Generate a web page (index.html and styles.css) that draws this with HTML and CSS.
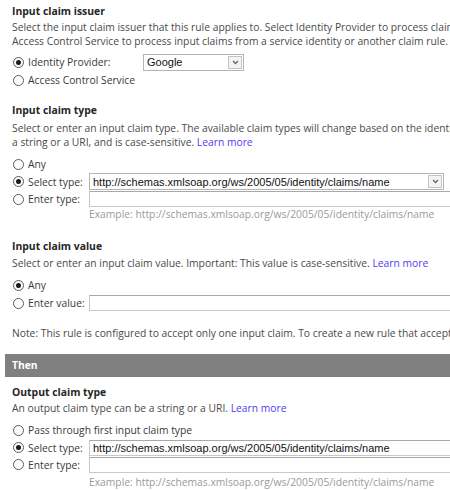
FILE: index.html
```html
<!DOCTYPE html>
<html>
<head>
<meta charset="utf-8">
<link rel="stylesheet" href="styles.css">
</head>
<body>
<div class="page">
  <section class="group g1">
    <h2 class="title">Input claim issuer</h2>
    <p class="desc">Select the input claim issuer that this rule applies to. Select Identity Provider to process claims issued by an identity provider. Select<br>Access Control Service to process input claims from a service identity or another claim rule.</p>
    <div class="opts">
      <div class="opt">
        <span class="radio checked"></span>
        <span class="lbl lbl-wide">Identity Provider:</span>
        <div class="select small"><span class="val">Google</span><span class="arrow"><svg width="7" height="5" viewBox="0 0 7 5"><path d="M1 1l2.5 2.5L6 1" fill="none" stroke="#666" stroke-width="1.3"/></svg></span></div>
      </div>
      <div class="opt">
        <span class="radio"></span>
        <span class="lbl">Access Control Service</span>
      </div>
    </div>
  </section>

  <section class="group g2">
    <h2 class="title">Input claim type</h2>
    <p class="desc">Select or enter an input claim type. The available claim types will change based on the identity provider selected. An input claim type can be<br>a string or a URI, and is case-sensitive. <a class="link" href="#">Learn more</a></p>
    <div class="opts">
      <div class="opt">
        <span class="radio"></span>
        <span class="lbl">Any</span>
      </div>
      <div class="opt short">
        <span class="radio checked"></span>
        <span class="lbl lbl-narrow">Select type:</span>
        <div class="select wide"><span class="val">http://schemas.xmlsoap.org/ws/2005/05/identity/claims/name</span><span class="arrow"><svg width="7" height="5" viewBox="0 0 7 5"><path d="M1 1l2.5 2.5L6 1" fill="none" stroke="#666" stroke-width="1.3"/></svg></span></div>
      </div>
      <div class="opt">
        <span class="radio"></span>
        <span class="lbl lbl-narrow">Enter type:</span>
        <div class="input"></div>
      </div>
      <p class="example">Example: http://schemas.xmlsoap.org/ws/2005/05/identity/claims/name</p>
    </div>
  </section>

  <section class="group g3">
    <h2 class="title">Input claim value</h2>
    <p class="desc">Select or enter an input claim value. Important: This value is case-sensitive. <a class="link" href="#">Learn more</a></p>
    <div class="opts">
      <div class="opt">
        <span class="radio checked"></span>
        <span class="lbl">Any</span>
      </div>
      <div class="opt">
        <span class="radio"></span>
        <span class="lbl lbl-narrow">Enter value:</span>
        <div class="input"></div>
      </div>
    </div>
    <p class="note">Note: This rule is configured to accept only one input claim. To create a new rule that accepts multiple input claims, use the advanced rule editor.</p>
  </section>

  <div class="bar">Then</div>

  <section class="group g4">
    <h2 class="title">Output claim type</h2>
    <p class="desc">An output claim type can be a string or a URI. <a class="link" href="#">Learn more</a></p>
    <div class="opts">
      <div class="opt">
        <span class="radio"></span>
        <span class="lbl">Pass through first input claim type</span>
      </div>
      <div class="opt short">
        <span class="radio checked"></span>
        <span class="lbl lbl-narrow">Select type:</span>
        <div class="input"><span class="val">http://schemas.xmlsoap.org/ws/2005/05/identity/claims/name</span></div>
      </div>
      <div class="opt short">
        <span class="radio"></span>
        <span class="lbl lbl-narrow">Enter type:</span>
        <div class="input"></div>
      </div>
      <p class="example ex-last">Example: http://schemas.xmlsoap.org/ws/2005/05/identity/claims/name</p>
    </div>
  </section>
</div>
</body>
</html>
```

FILE: styles.css
```css
html, body {
  margin: 0;
  padding: 0;
  background: #fff;
  overflow: hidden;
}

.page {
  width: 640px;
  padding-left: 5px;
  font-family: "Open Sans", "Segoe UI", sans-serif;
  font-size: 10.3px;
  color: #4a4a4a;
}

.group {
  padding-left: 7px;
}

.title {
  margin: 0;
  font-size: 10.4px;
  font-weight: 700;
  color: #262626;
  line-height: 15px;
}

.desc {
  margin: 1px 0 0;
  line-height: 14px;
  white-space: nowrap;
}

.link {
  color: #4f3cf0;
  text-decoration: none;
}

.g1 { padding-top: 4px; }
.g1 .opts { margin-top: 5px; }
.g2 { padding-top: 14px; }
.g2 .desc { margin-top: 3px; }
.g2 .opts { margin-top: 6px; }
.g3 { padding-top: 18px; }
.g3 .desc { margin-top: 2px; }
.g3 .opts { margin-top: 6px; }
.g4 { padding-top: 8px; }
.g4 .desc { margin-top: 1px; }
.g4 .opts { margin-top: 6px; }

.opt {
  display: flex;
  align-items: center;
  height: 18px;
  white-space: nowrap;
}

.opt.short { height: 17px; }

.radio {
  flex: none;
  width: 9px;
  height: 9px;
  border: 1px solid #5a5a5a;
  border-radius: 50%;
  margin: 0 4px 0 1px;
  position: relative;
  background: #fff;
}

.radio.checked::after {
  content: "";
  position: absolute;
  left: 2px;
  top: 2px;
  width: 5px;
  height: 5px;
  border-radius: 50%;
  background: #1a1a1a;
}

.lbl {
  color: #3a3a3a;
}

.lbl-wide { width: 115px; flex: none; }
.lbl-narrow { width: 61px; flex: none; }

.select {
  display: flex;
  align-items: center;
  border: 1px solid #b4b4b4;
  box-sizing: border-box;
  height: 17px;
  flex: none;
}

.select.small { width: 101px; }
.select.wide { width: 355px; }

.val {
  flex: 1;
  padding-left: 3px;
  font-family: "Liberation Sans", Arial, sans-serif;
  font-size: 11px;
  color: #111;
}

.arrow {
  flex: none;
  width: 12px;
  height: 11px;
  margin-right: 1px;
  border: 1px solid #c4c4c4;
  background: #f4f4f4;
  display: flex;
  align-items: center;
  justify-content: center;
}

.input {
  width: 400px;
  height: 16px;
  box-sizing: border-box;
  border: 1px solid #c8c8c8;
  border-top-color: #a8a8a8;
  display: flex;
  align-items: center;
  flex: none;
}

.example {
  margin: -1px 0 0 77px;
  line-height: 14px;
  color: #9a9a9a;
  white-space: nowrap;
}

.example.ex-last { margin-top: 2px; }

.note {
  margin: 14px 0 0;
  line-height: 14px;
  white-space: nowrap;
}

.bar {
  margin-top: 14px;
  height: 23px;
  line-height: 23px;
  background: #808080;
  color: #fff;
  font-weight: 700;
  padding-left: 7px;
}
```
